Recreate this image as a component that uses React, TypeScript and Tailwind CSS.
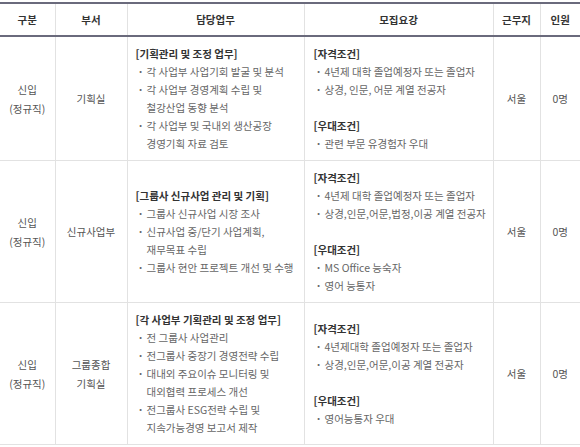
import React from 'react';

type Block = { title: string; items: string[][] };

interface Row {
  kind: string[];
  dept: string[];
  duty: Block[];
  req: Block[];
  place: string;
  count: string;
}

const rows: Row[] = [
  {
    kind: ['신입', '(정규직)'],
    dept: ['기획실'],
    duty: [
      {
        title: '[기획관리 및 조정 업무]',
        items: [
          ['각 사업부 사업기회 발굴 및 분석'],
          ['각 사업부 경영계획 수립 및', '철강산업 동향 분석'],
          ['각 사업부 및 국내외 생산공장', '경영기획 자료 검토'],
        ],
      },
    ],
    req: [
      {
        title: '[자격조건]',
        items: [['4년제 대학 졸업예정자 또는 졸업자'], ['상경, 인문, 어문 계열 전공자']],
      },
      { title: '[우대조건]', items: [['관련 부문 유경험자 우대']] },
    ],
    place: '서울',
    count: '0명',
  },
  {
    kind: ['신입', '(정규직)'],
    dept: ['신규사업부'],
    duty: [
      {
        title: '[그룹사 신규사업 관리 및 기획]',
        items: [
          ['그룹사 신규사업 시장 조사'],
          ['신규사업 중/단기 사업계획,', '재무목표 수립'],
          ['그룹사 현안 프로젝트 개선 및 수행'],
        ],
      },
    ],
    req: [
      {
        title: '[자격조건]',
        items: [['4년제 대학 졸업예정자 또는 졸업자'], ['상경,인문,어문,법정,이공 계열 전공자']],
      },
      { title: '[우대조건]', items: [['MS Office 능숙자'], ['영어 능통자']] },
    ],
    place: '서울',
    count: '0명',
  },
  {
    kind: ['신입', '(정규직)'],
    dept: ['그룹종합', '기획실'],
    duty: [
      {
        title: '[각 사업부 기획관리 및 조정 업무]',
        items: [
          ['전 그룹사 사업관리'],
          ['전그룹사 중장기 경영전략 수립'],
          ['대내외 주요이슈 모니터링 및', '대외협력 프로세스 개선'],
          ['전그룹사 ESG전략 수립 및', '지속가능경영 보고서 제작'],
        ],
      },
    ],
    req: [
      {
        title: '[자격조건]',
        items: [['4년제대학 졸업예정자 또는 졸업자'], ['상경,인문,어문,이공 계열 전공자']],
      },
      { title: '[우대조건]', items: [['영어능통자 우대']] },
    ],
    place: '서울',
    count: '0명',
  },
];

const BlockList = ({ blocks }: { blocks: Block[] }) => (
  <div>
    {blocks.map((b, i) => (
      <div key={i} className={i > 0 ? 'mt-[18px]' : ''}>
        <div className="font-bold text-[#333]">{b.title}</div>
        <ul>
          {b.items.map((lines, j) => (
            <li key={j} className="flex text-[#666]">
              <span className="w-[11px] shrink-0 pl-[2px] font-bold">·</span>
              <span>
                {lines.map((l, k) => (
                  <div key={k}>{l}</div>
                ))}
              </span>
            </li>
          ))}
        </ul>
      </div>
    ))}
  </div>
);

export default function App() {
  const th = 'h-[33px] border-t-2 border-b-2 border-t-[#6a6a7c] border-b-[#6a6a7c] font-bold text-[#333] text-center align-middle';
  const vline = 'border-l border-l-[#e2e2e2]';
  const td = 'border-b border-b-[#e2e2e2] align-middle';

  return (
    <div
      className="w-[580px] h-[447px] bg-white pt-[2px] overflow-hidden"
      style={{ fontFamily: '"Noto Sans CJK KR", "Noto Sans", sans-serif' }}
    >
      <table className="w-[580px] table-fixed border-collapse text-[10.5px] leading-[18px]">
        <colgroup>
          <col className="w-[55px]" />
          <col className="w-[72px]" />
          <col className="w-[177px]" />
          <col className="w-[189px]" />
          <col className="w-[47px]" />
          <col className="w-[40px]" />
        </colgroup>
        <thead>
          <tr>
            <th className={th}>구분</th>
            <th className={`${th} ${vline}`}>부서</th>
            <th className={`${th} ${vline}`}>담당업무</th>
            <th className={`${th} ${vline}`}>모집요강</th>
            <th className={`${th} ${vline}`}>근무지</th>
            <th className={`${th} ${vline}`}>인원</th>
          </tr>
        </thead>
        <tbody>
          {rows.map((r, i) => (
            <tr key={i}>
              <td className={`${td} text-center text-[#555] leading-[19px]`}>
                {r.kind.map((k, j) => (
                  <div key={j}>{k}</div>
                ))}
              </td>
              <td className={`${td} ${vline} text-center text-[#555] leading-[19px]`}>
                {r.dept.map((d, j) => (
                  <div key={j}>{d}</div>
                ))}
              </td>
              <td className={`${td} ${vline} pt-[8px] pb-[7px] pl-[8px] pr-0 whitespace-nowrap`}>
                <BlockList blocks={r.duty} />
              </td>
              <td className={`${td} ${vline} pt-[8px] pb-[7px] pl-[9px] pr-0 whitespace-nowrap`}>
                <BlockList blocks={r.req} />
              </td>
              <td className={`${td} ${vline} text-center text-[#555]`}>{r.place}</td>
              <td className={`${td} ${vline} text-center text-[#555]`}>{r.count}</td>
            </tr>
          ))}
        </tbody>
      </table>
    </div>
  );
}
